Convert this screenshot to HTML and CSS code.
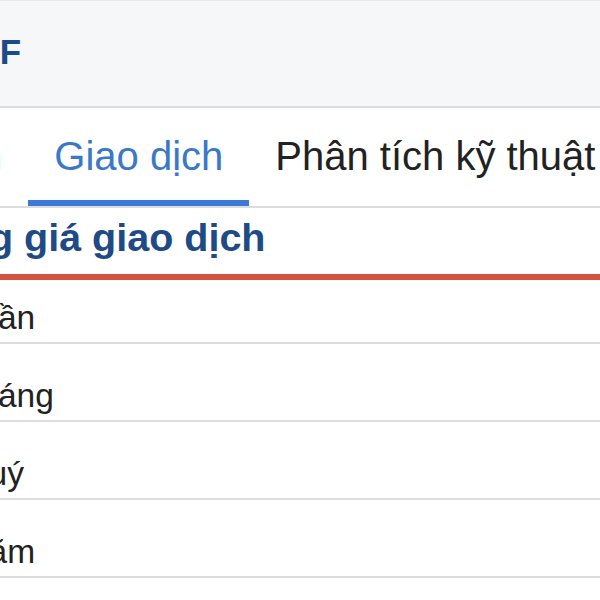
FILE: index.html
```html
<!DOCTYPE html>
<html lang="vi">
    <head>
        <meta charset="UTF-8">
        <meta name="viewport" content="width=device-width, initial-scale=1.0">
        <title>ETF</title>
        <link rel="stylesheet" href="styles.css">
    </head>
    <body>
        <div class="header">
            <h2 class="title">ETF</h2>
        </div>
        <div class="tabs">
            <div class="tab">Tổng quan</div>
            <div class="tab active">Giao dịch</div>
            <div class="tab">Phân tích kỹ thuật</div>
        </div>
        <div class="section">
            <h3 class="section-title">Biến động giá giao dịch</h3>
        </div>
        <ul class="list">
            <li class="row">1 tuần</li>
            <li class="row">1 tháng</li>
            <li class="row">1 quý</li>
            <li class="row">1 năm</li>
        </ul>
    </body>
</html>
```

FILE: styles.css
```css
body {
    margin: 0;
    overflow: hidden;
    font-family: "Liberation Sans", Arial, sans-serif;
    background: #ffffff;
    color: #222222;
}
.header {
    height: 108px;
    box-sizing: border-box;
    padding-top: 31px;
    background: #f6f7f9;
    border-top: 1px solid #e8e9eb;
    border-bottom: 2px solid #dcdcdc;
}
.title {
    margin: 0 0 0 -45px;
    font-size: 35px;
    line-height: 40px;
    font-weight: bold;
    color: #1d4b8a;
}
.tabs {
    display: flex;
    margin-left: -215px;
    border-bottom: 2px solid #dddddd;
    white-space: nowrap;
}
.tab {
    padding: 25px 26px 21px;
    font-size: 40px;
    line-height: 46px;
    border-bottom: 6px solid transparent;
    color: #222222;
}
.tab.active {
    color: #3b78c9;
    border-bottom-color: #3b7bd5;
}
.section {
    padding: 6px 0 14px;
    border-bottom: 6px solid #d4533f;
}
.section-title {
    margin: 0 0 0 -180px;
    font-size: 39.5px;
    line-height: 46px;
    font-weight: bold;
    color: #1e4a86;
    white-space: nowrap;
}
.list {
    list-style: none;
    margin: 0 0 0 -58px;
    padding: 0;
}
.row {
    height: 71px;
    padding-bottom: 5px;
    display: flex;
    align-items: flex-end;
    font-size: 33.5px;
    line-height: 38px;
    border-bottom: 2px solid #dddddd;
}
.row:first-child {
    height: 57px;
}
```
